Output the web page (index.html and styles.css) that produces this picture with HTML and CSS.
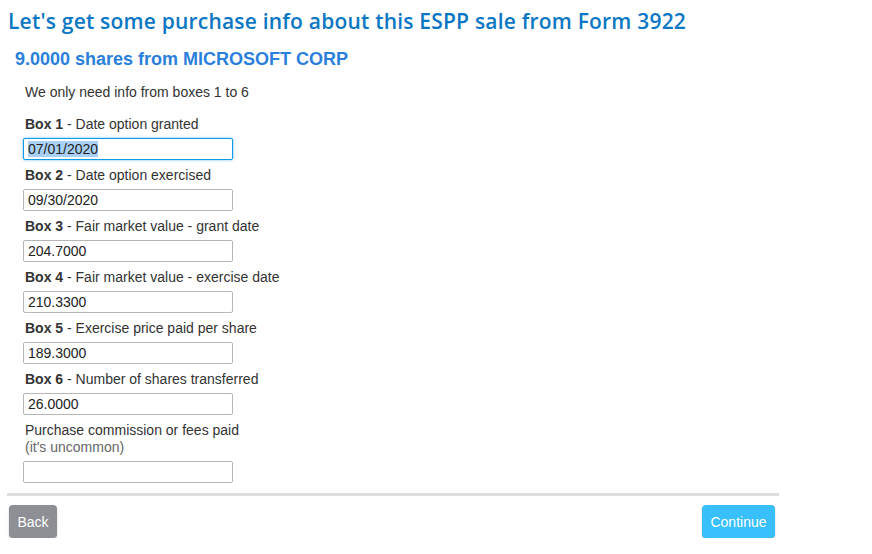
FILE: index.html
```html
<!DOCTYPE html>
<html lang="en">
<head>
<meta charset="UTF-8" />
<meta name="viewport" content="width=device-width, initial-scale=1" />
<title>ESPP sale - Form 3922</title>
<link rel="stylesheet" href="styles.css">
</head>
<body>

<div class="page">
  <h1>Let's get some purchase info about this ESPP sale from Form 3922</h1>
  <h2>9.0000 shares from MICROSOFT CORP</h2>

  <form id="espp-form" class="espp-form">
    <p class="intro">We only need info from boxes 1 to 6</p>

    <div class="field">
      <label for="box1"><b>Box 1</b> - Date option granted</label>
      <input type="text" id="box1" value="07/01/2020" autocomplete="off" />
    </div>
    <div class="field">
      <label for="box2"><b>Box 2</b> - Date option exercised</label>
      <input type="text" id="box2" value="09/30/2020" autocomplete="off" />
    </div>
    <div class="field">
      <label for="box3"><b>Box 3</b> - Fair market value - grant date</label>
      <input type="text" id="box3" value="204.7000" autocomplete="off" />
    </div>
    <div class="field">
      <label for="box4"><b>Box 4</b> - Fair market value - exercise date</label>
      <input type="text" id="box4" value="210.3300" autocomplete="off" />
    </div>
    <div class="field">
      <label for="box5"><b>Box 5</b> - Exercise price paid per share</label>
      <input type="text" id="box5" value="189.3000" autocomplete="off" />
    </div>
    <div class="field">
      <label for="box6"><b>Box 6</b> - Number of shares transferred</label>
      <input type="text" id="box6" value="26.0000" autocomplete="off" />
    </div>
    <div class="field">
      <label for="fees">Purchase commission or fees paid<span class="hint">(it's uncommon)</span></label>
      <input type="text" id="fees" value="" autocomplete="off" />
    </div>
  </form>

  <div class="actions">
    <button type="button" class="btn btn-back">Back</button>
    <button type="submit" form="espp-form" class="btn btn-continue">Continue</button>
  </div>
</div>

<script>
  const firstBox = document.getElementById('box1');
  firstBox.focus();
  firstBox.select();
</script>

</body>
</html>
```

FILE: styles.css
```css
body {
  margin: 0;
  background: #fff;
  font-family: "Liberation Sans", Arial, sans-serif;
  font-size: 14px;
  color: #333;
}
.page {
  width: 772px;
  padding: 8px 0 0 7px;
}
h1 {
  margin: 0 0 0 1px;
  font-family: "Open Sans", sans-serif;
  font-weight: 600;
  font-size: 21px;
  line-height: 26px;
  color: #0b77c4;
  letter-spacing: 0.2px;
}
h2 {
  margin: 14px 0 0 8px;
  font-size: 18px;
  line-height: 22px;
  font-weight: 700;
  color: #2a7fdc;
}
.espp-form {
  padding: 13px 0 10px 16px;
}
.intro {
  margin: 0 0 15px 2px;
  line-height: 18px;
}
.field {
  margin-bottom: 7px;
}
.field:last-child {
  margin-bottom: 0;
}
.field label {
  display: block;
  margin-left: 2px;
  line-height: 17px;
  margin-bottom: 5px;
}
.field label b {
  font-weight: 700;
}
.hint {
  display: block;
  color: #666;
}
.field input {
  display: block;
  box-sizing: border-box;
  width: 210px;
  height: 22px;
  margin: 0;
  padding: 1px 4px;
  border: 1px solid #b6b6b6;
  border-radius: 2px;
  font-family: "Liberation Sans", Arial, sans-serif;
  font-size: 14px;
  color: #222;
}
.field input:focus {
  outline: none;
  border-color: #0d9ae6;
  box-shadow: 0 0 3px rgba(13, 154, 230, 0.6);
}
.field input::selection {
  background: #a9d1f5;
}
.actions {
  display: flex;
  justify-content: space-between;
  border-top: 3px solid #dddddd;
  padding: 9px 4px 0 2px;
}
.btn {
  border: none;
  border-radius: 4px;
  height: 33px;
  padding: 0 8.5px;
  font-family: "Liberation Sans", Arial, sans-serif;
  font-size: 14px;
  color: #fff;
  cursor: pointer;
  box-shadow: 0 1px 2px rgba(0,0,0,0.25);
}
.btn-back {
  background: #8d8f95;
}
.btn-continue {
  background: #38c0fd;
}
```
